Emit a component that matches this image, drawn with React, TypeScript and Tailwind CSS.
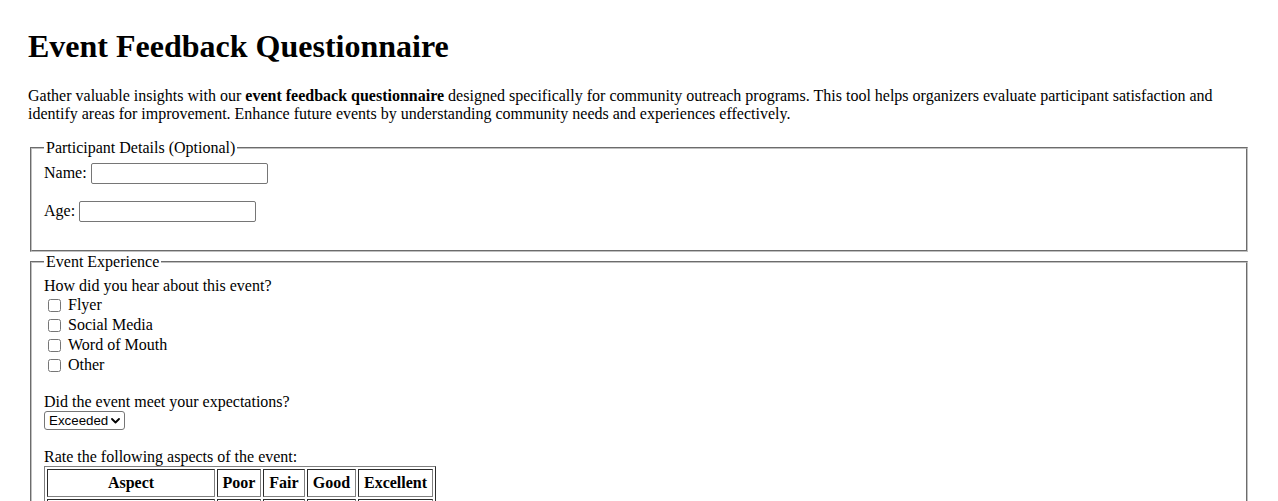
import React from "react";

const aspects = ["Venue", "Organization", "Speakers", "Activities", "Refreshments"];
const levels = [
  { label: "Poor", w: "w-[44px]" },
  { label: "Fair", w: "w-[42px]" },
  { label: "Good", w: "w-[49px]" },
  { label: "Excellent", w: "w-[75px]" },
];

function Chevron() {
  return (
    <svg width="9" height="6" viewBox="0 0 9 6" className="block">
      <path d="M1 1 L4.5 4.5 L8 1" fill="none" stroke="#000" strokeWidth="1.8" strokeLinecap="round" strokeLinejoin="round" />
    </svg>
  );
}

export default function App() {
  const inputCls =
    "inline-block w-[177px] h-[21px] border border-[#767676] rounded-[2px] bg-white px-[2px] py-[1px] font-['Liberation_Sans',Arial,sans-serif] text-[13.333px] align-baseline";
  const fieldsetCls =
    "mx-[2px] border-2 [border-style:groove] border-[#c0c0c0] px-[12px] pb-[10px]";
  const cellCls = "border border-[#808080] [border-style:inset] p-[4px]";
  return (
    <div className="min-h-screen bg-white text-black font-['Liberation_Serif','Times_New_Roman',serif] text-[16px] leading-[normal] px-[28px] pt-[28px] pb-[20px]">
      <h1 className="text-[32px] font-bold leading-[normal] mb-[22px]">Event Feedback Questionnaire</h1>
      <p className="mb-[16px]">
        Gather valuable insights with our <strong className="font-bold">event feedback questionnaire</strong> designed
        specifically for community outreach programs. This tool helps organizers evaluate participant satisfaction and
        identify areas for improvement. Enhance future events by understanding community needs and experiences
        effectively.
      </p>

      <form>
        <fieldset className={fieldsetCls + " pt-[5.6px]"}>
          <legend className="px-[2px]">Participant Details (Optional)</legend>
          <div className="mb-[17px]">
            <label htmlFor="name">Name:</label> <input id="name" type="text" className={inputCls} />
          </div>
          <div className="mb-[18px]">
            <label htmlFor="age">Age:</label> <input id="age" type="text" className={inputCls} />
          </div>
        </fieldset>

        <fieldset className={fieldsetCls + " mt-[1px] pt-[6.6px]"}>
          <legend className="px-[2px]">Event Experience</legend>
          <div>How did you hear about this event?</div>
          {["Flyer", "Social Media", "Word of Mouth", "Other"].map((s) => (
            <div key={s} className="flex items-center h-[20px]">
              <input type="checkbox" id={s} className="w-[13px] h-[13px] ml-[4px] mr-[7px] my-[3px]" />
              <label htmlFor={s}>{s}</label>
            </div>
          ))}

          <div className="mt-[18px]">Did the event meet your expectations?</div>
          <div className="flex items-center w-[81px] h-[19px] border border-[#767676] rounded-[3px] bg-white pl-[4px] pr-[4px] font-['Liberation_Sans',Arial,sans-serif] text-[13.333px]">
            <select className="appearance-none bg-transparent outline-none text-[13.333px] leading-[17px] w-[62px]" defaultValue="Exceeded">
              <option>Exceeded</option>
              <option>Met</option>
              <option>Not Met</option>
            </select>
            <span className="ml-auto">
              <Chevron />
            </span>
          </div>

          <div className="mt-[18px]">Rate the following aspects of the event:</div>
          <table className="border-separate border-spacing-[2px] border border-[#808080] [border-style:outset]">
            <thead>
              <tr>
                <th className={cellCls + " w-[168px] font-bold text-center"}>Aspect</th>
                {levels.map((l) => (
                  <th key={l.label} className={cellCls + " " + l.w + " font-bold text-center"}>
                    {l.label}
                  </th>
                ))}
              </tr>
            </thead>
            <tbody>
              {aspects.map((a) => (
                <tr key={a}>
                  <td className={cellCls}>{a}</td>
                  {levels.map((l) => (
                    <td key={l.label} className={cellCls + " text-center"}>
                      <input type="radio" name={a} className="w-[13px] h-[13px] m-[3px]" />
                    </td>
                  ))}
                </tr>
              ))}
            </tbody>
          </table>
        </fieldset>
      </form>
    </div>
  );
}
